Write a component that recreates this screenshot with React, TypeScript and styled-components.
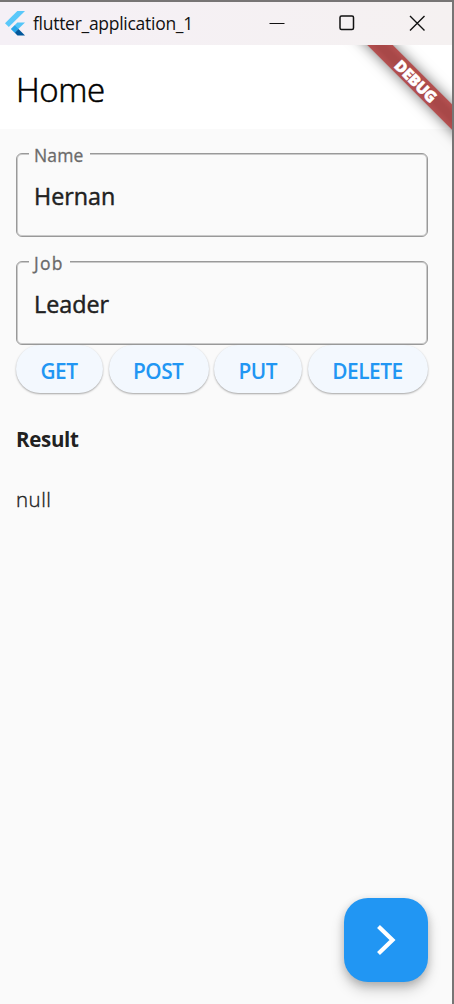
import React from "react";
import styled, { createGlobalStyle } from "styled-components";

const GlobalStyle = createGlobalStyle`
  * { box-sizing: border-box; }
  body { margin: 0; background: #fafafa; font-family: "Open Sans", "Noto Sans", sans-serif; }
`;

const Window = styled.div`
  width: 454px;
  height: 1004px;
  display: flex;
  flex-direction: column;
  overflow: hidden;
  background: #fafafa;
  border-top: 2px solid #777575;
  border-right: 2px solid #777575;
`;

const TitleBar = styled.header`
  height: 43px;
  flex: none;
  display: flex;
  align-items: center;
  padding: 0 0 1px 5px;
  background: linear-gradient(90deg, #f5f0f6, #f5f1f1);
`;

const WindowTitle = styled.span`
  flex: 1;
  margin: -1px 0 0 8px;
  font-size: 17.5px;
  line-height: 24px;
  letter-spacing: -0.28px;
  color: #111;
  white-space: nowrap;
`;

const WindowControls = styled.div`
  display: flex;
  width: 210px;
`;

const ControlButton = styled.button`
  flex: 1;
  height: 41px;
  border: 0;
  padding: 0;
  background: none;
  display: flex;
  align-items: center;
  justify-content: center;
`;

const Content = styled.main`
  position: relative;
  flex: 1;
  overflow: hidden;
  display: flex;
  flex-direction: column;
`;

const AppBar = styled.div`
  height: 84px;
  flex: none;
  display: flex;
  align-items: center;
  padding: 5px 16px 0;
  background: #fff;
`;

const AppTitle = styled.h1`
  margin: 0;
  font-size: 33px;
  line-height: 42px;
  font-weight: 300;
  letter-spacing: -0.4px;
  color: #000;
  -webkit-text-stroke: 0.55px #000;
`;

const BannerRibbon = styled.div`
  position: absolute;
  left: 336px;
  top: 27px;
  width: 160px;
  height: 18px;
  transform: rotate(45deg);
  display: flex;
  align-items: center;
  justify-content: center;
  background: linear-gradient(#b45050, #a84848 35%, #a84848 65%, #b45050);
  box-shadow: 0 0 14px rgba(0, 0, 0, 0.55);
  color: #fff;
  font-size: 15.5px;
  font-weight: 800;
  letter-spacing: -0.3px;
  line-height: 18px;
  -webkit-text-stroke: 0.5px #fff;
`;

const Form = styled.div`
  display: flex;
  flex-direction: column;
  gap: 24px;
  padding: 24px 24px 0 16px;
`;

const Field = styled.label`
  position: relative;
  display: flex;
  align-items: center;
  height: 84px;
  border: 1px solid #999;
  border-radius: 6px;
  box-shadow: inset 0 0 0 1px #cacaca;
  padding: 2px 17px 0;
`;

const FieldLabel = styled.span<{ $tracking: number }>`
  position: absolute;
  left: 12px;
  top: -12px;
  padding: 0 6px 0 5px;
  background: #fafafa;
  color: #6a6a6a;
  font-size: 17.5px;
  line-height: 26px;
  letter-spacing: ${(p) => p.$tracking}px;
  -webkit-text-stroke: 0.3px #6a6a6a;
`;

const FieldValue = styled.span`
  font-size: 23.3px;
  line-height: 32px;
  color: #212121;
  -webkit-text-stroke: 0.45px #212121;
`;

const Actions = styled.div`
  display: flex;
  justify-content: space-between;
  padding: 0 24px 0 16px;
`;

const ActionButton = styled.button<{ $width: number }>`
  width: ${(p) => p.$width}px;
  height: 48px;
  padding: 3px 1px 0 0;
  border: 0;
  border-radius: 24px;
  background: #f3f8fe;
  box-shadow: 0 1px 2px rgba(0, 0, 0, 0.34);
  color: #2196f3;
  font-family: inherit;
  font-size: 20.8px;
  font-weight: 600;
  letter-spacing: -0.45px;
`;

const Results = styled.section`
  display: flex;
  flex-direction: column;
  gap: 30px;
  padding: 31px 16px;
  color: #212121;
  font-size: 20.5px;
  line-height: 30px;
`;

const ResultHeading = styled.strong`
  font-weight: 700;
  letter-spacing: -0.3px;
`;

const ResultText = styled.span`
  font-weight: 300;
  letter-spacing: 0.5px;
  -webkit-text-stroke: 0.35px #212121;
`;

const Fab = styled.button`
  position: absolute;
  right: 24px;
  bottom: 22px;
  width: 84px;
  height: 84px;
  border: 0;
  padding: 0;
  border-radius: 24px;
  background: #2196f3;
  box-shadow: 0 8px 14px rgba(0, 0, 0, 0.18), 0 3px 8px rgba(0, 0, 0, 0.18);
`;

const fields = [
  { label: "Name", value: "Hernan", tracking: 0.15 },
  { label: "Job", value: "Leader", tracking: 1.3 },
];

const actions = [
  { label: "GET", width: 87 },
  { label: "POST", width: 100 },
  { label: "PUT", width: 88 },
  { label: "DELETE", width: 120 },
];

export default function App() {
  return (
    <>
      <GlobalStyle />
      <Window>
        <TitleBar>
          <svg width="20" height="25" viewBox="0 0 20 25">
            <path d="M0 12.3 12.3 0H20L3.8 16Z" fill="#5ac8fa" />
            <path d="M12.3 11.5H20L13.3 18 9.8 21.8 6 18Z" fill="#54c5f8" />
            <path d="M6 18 9.8 14.2 13.5 18 9.8 21.8Z" fill="#29a5e8" />
            <path d="M9.8 21.8 13.5 18 20 24.5H12.5Z" fill="#01579b" />
          </svg>
          <WindowTitle>flutter_application_1</WindowTitle>
          <WindowControls>
            <ControlButton aria-label="Minimize">
              <svg width="16" height="16"><path d="M.5 8.5h15" stroke="#111" /></svg>
            </ControlButton>
            <ControlButton aria-label="Maximize">
              <svg width="16" height="16"><rect x="1" y="1" width="13.5" height="13.5" rx="1.5" fill="none" stroke="#111" strokeWidth="1.5" /></svg>
            </ControlButton>
            <ControlButton aria-label="Close">
              <svg width="16" height="16"><path d="M1 1 15.5 15.5M15.5 1 1 15.5" stroke="#111" strokeWidth="1.4" /></svg>
            </ControlButton>
          </WindowControls>
        </TitleBar>
        <Content>
          <AppBar>
            <AppTitle>Home</AppTitle>
          </AppBar>
          <Form>
            {fields.map((f) => (
              <Field key={f.label}>
                <FieldLabel $tracking={f.tracking}>{f.label}</FieldLabel>
                <FieldValue>{f.value}</FieldValue>
              </Field>
            ))}
          </Form>
          <Actions>
            {actions.map((a) => (
              <ActionButton key={a.label} $width={a.width}>{a.label}</ActionButton>
            ))}
          </Actions>
          <Results>
            <ResultHeading>Result</ResultHeading>
            <ResultText>null</ResultText>
          </Results>
          <BannerRibbon>DEBUG</BannerRibbon>
          <Fab aria-label="Next">
            <svg width="84" height="84" viewBox="0 0 84 84" style={{ display: "block" }}>
              <path d="M34.5 28.5 48.5 42 34.5 55.5" fill="none" stroke="#fff" strokeWidth="4.2" />
            </svg>
          </Fab>
        </Content>
      </Window>
    </>
  );
}
